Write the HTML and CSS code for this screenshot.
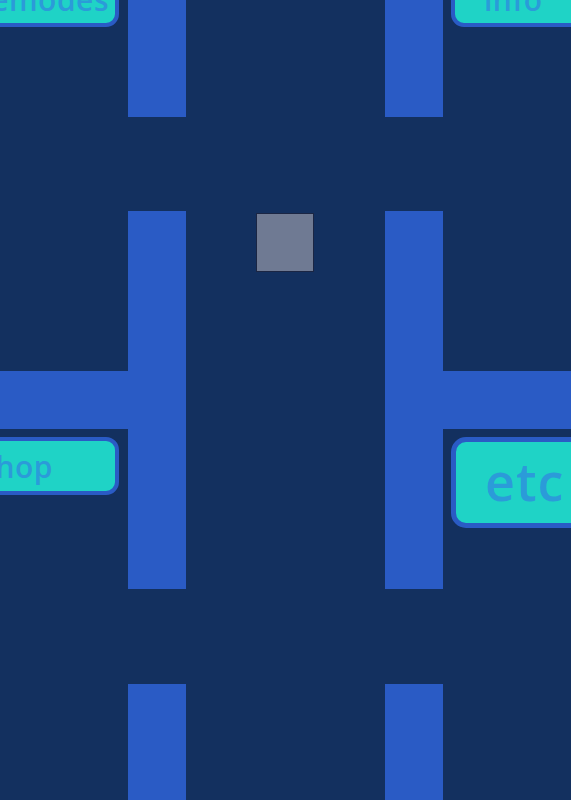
FILE: index.html
```html
<!DOCTYPE html>
<html>
<head>
<meta charset="utf-8">
<link rel="stylesheet" href="styles.css">
</head>
<body>
<div class="map">
  <div class="wall v left seg1"></div>
  <div class="wall v left seg2"></div>
  <div class="wall v left seg3"></div>
  <div class="wall v right seg1"></div>
  <div class="wall v right seg2"></div>
  <div class="wall v right seg3"></div>
  <div class="wall h hleft"></div>
  <div class="wall h hright"></div>

  <div class="player"></div>

  <div class="btn btn-gamemodes"><span>gamemodes</span></div>
  <div class="btn btn-info"><span>info</span></div>
  <div class="btn btn-shop"><span>shop</span></div>
  <div class="btn btn-etc"><span>etc</span></div>
</div>
</body>
</html>
```

FILE: styles.css
```css
html, body {
  margin: 0;
  padding: 0;
  background: #13305f;
  overflow: hidden;
}

.map {
  position: relative;
  width: 571px;
  height: 800px;
  background: #13305f;
  overflow: hidden;
  font-family: "Open Sans", "DejaVu Sans", sans-serif;
}

.wall {
  position: absolute;
  background: #2a5bc5;
}

.v { width: 58px; }
.left { left: 128px; }
.right { left: 385px; }
.seg1 { top: 0; height: 117px; }
.seg2 { top: 211px; height: 378px; }
.seg3 { top: 684px; height: 116px; }

.h { top: 371px; height: 58px; }
.hleft { left: 0; width: 128px; }
.hright { left: 443px; width: 128px; }

.player {
  position: absolute;
  left: 256px;
  top: 213px;
  width: 56px;
  height: 57px;
  background: #6f7a93;
  border: 1px solid #1b2644;
}

.btn {
  position: absolute;
  box-sizing: border-box;
  background: #1fd3c6;
  border: 4px solid #2a5bc5;
  border-radius: 13px;
  color: #2b9bd9;
  font-weight: 600;
  display: flex;
  align-items: center;
  white-space: nowrap;
}

.btn-gamemodes {
  left: -100px;
  top: -31px;
  width: 219px;
  height: 58px;
  justify-content: flex-end;
  padding-right: 6px;
  padding-top: 3px;
  font-size: 30px;
  letter-spacing: 0.5px;
}

.btn-info {
  left: 451px;
  top: -31px;
  width: 200px;
  height: 58px;
  padding-left: 29px;
  padding-top: 3px;
  font-size: 30px;
  letter-spacing: 0.5px;
}

.btn-shop {
  left: -100px;
  top: 437px;
  width: 219px;
  height: 58px;
  justify-content: flex-end;
  padding-right: 62px;
  font-size: 30px;
  letter-spacing: 0.5px;
}

.btn-etc {
  left: 451px;
  top: 437px;
  width: 200px;
  height: 91px;
  border-width: 5px;
  border-radius: 15px;
  padding-left: 29px;
  font-size: 52px;
  padding-bottom: 4px;
  letter-spacing: 1px;
}
```
